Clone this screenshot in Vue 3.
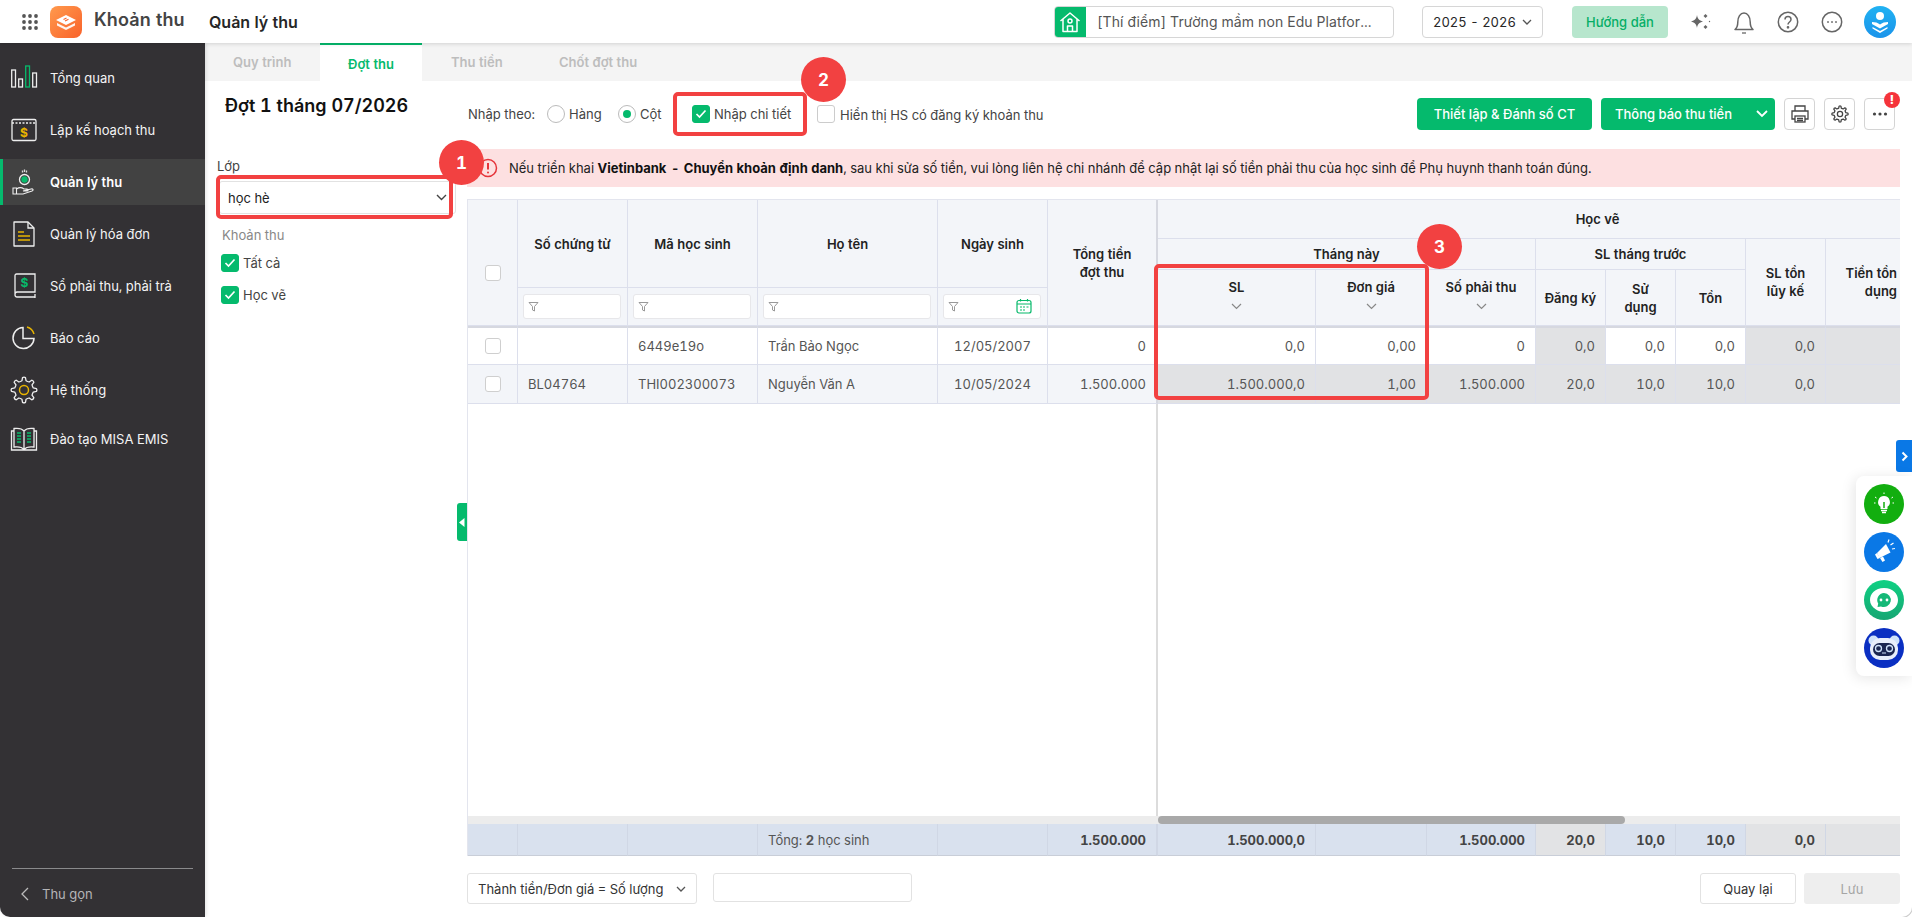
<script setup>
const gear = (c, ro, ri, n) => {
  let d = ''
  for (let i = 0; i < n; i++) {
    const a = (i / n) * Math.PI * 2
    const s = Math.PI / n
    const p = (r, t) => `${(c + r * Math.cos(t)).toFixed(2)} ${(c + r * Math.sin(t)).toFixed(2)}`
    d += `${i ? 'L' : 'M'}${p(ri, a - s * 0.55)}L${p(ro, a - s * 0.3)}Q${p(ro + 0.8, a)} ${p(ro, a + s * 0.3)}L${p(ri, a + s * 0.55)}Q${p(ri - 0.3, a + s)} ${p(ri, a + s * 1.45)}`
  }
  return d + 'Z'
}
const bigGear = gear(14, 12.5, 9.5, 8)
const smallGear = gear(12, 10.5, 8, 8)

const menu = [
  { key: 'overview', label: 'Tổng quan' },
  { key: 'plan', label: 'Lập kế hoạch thu' },
  { key: 'manage', label: 'Quản lý thu', active: true },
  { key: 'invoice', label: 'Quản lý hóa đơn' },
  { key: 'ledger', label: 'Sổ phải thu, phải trả' },
  { key: 'report', label: 'Báo cáo' },
  { key: 'system', label: 'Hệ thống' },
  { key: 'training', label: 'Đào tạo MISA EMIS', tight: true }
]
const tabs = [
  { label: 'Quy trình', cls: 't1' },
  { label: 'Đợt thu', cls: 't2', active: true },
  { label: 'Thu tiền', cls: 't3' },
  { label: 'Chốt đợt thu', cls: 't4' }
]
const heads = [
  { text: 'Số chứng từ', area: '1 / 2 / 4 / 3' },
  { text: 'Mã học sinh', area: '1 / 3 / 4 / 4' },
  { text: 'Họ tên', area: '1 / 4 / 4 / 5' },
  { text: 'Ngày sinh', area: '1 / 5 / 4 / 6' },
  { text: 'Tổng tiền đợt thu', area: '1 / 6 / 5 / 7', cls: 'frozen narrow' },
  { text: 'Học vẽ', area: '1 / 7 / 2 / 15', cls: 'group' },
  { text: 'Tháng này', area: '2 / 7 / 3 / 10' },
  { text: 'SL tháng trước', area: '2 / 10 / 3 / 13' },
  { text: 'SL tồn lũy kế', area: '2 / 13 / 5 / 14', cls: 'narrow2' },
  { text: 'Tiền tồn dụng', area: '2 / 14 / 5 / 15', cls: 'endcol' },
  { text: 'SL', area: '3 / 7 / 5 / 8', chev: true },
  { text: 'Đơn giá', area: '3 / 8 / 5 / 9', chev: true },
  { text: 'Số phải thu', area: '3 / 9 / 5 / 10', chev: true },
  { text: 'Đăng ký', area: '3 / 10 / 5 / 11' },
  { text: 'Sử dụng', area: '3 / 11 / 5 / 12', cls: 'narrow' },
  { text: 'Tồn', area: '3 / 12 / 5 / 13' }
]
const filters = [
  { area: '4 / 2 / 5 / 3' },
  { area: '4 / 3 / 5 / 4' },
  { area: '4 / 4 / 5 / 5' },
  { area: '4 / 5 / 5 / 6', date: true }
]
const rows = [
  { cls: 'first', cells: [
    ['', ''], ['6449e19o', ''], ['Trần Bảo Ngọc', ''], ['12/05/2007', 'mid'], ['0', 'num frozen'],
    ['0,0', 'num w'], ['0,00', 'num w'], ['0', 'num w'], ['0,0', 'num g'], ['0,0', 'num w'], ['0,0', 'num w'], ['0,0', 'num g'], ['', 'num g end']
  ] },
  { cls: 'second', cells: [
    ['BL04764', ''], ['THI002300073', ''], ['Nguyễn Văn A', ''], ['10/05/2024', 'mid'], ['1.500.000', 'num frozen'],
    ['1.500.000,0', 'num g'], ['1,00', 'num g'], ['1.500.000', 'num g'], ['20,0', 'num g'], ['10,0', 'num g'], ['10,0', 'num g'], ['0,0', 'num g'], ['', 'num g end']
  ] }
]
const foot = [
  ['1.500.000', 'num frozen'],
  ['1.500.000,0', 'num'], ['', 'num'], ['1.500.000', 'num'], ['20,0', 'num g'], ['10,0', 'num'], ['10,0', 'num'], ['0,0', 'num g'], ['', 'num g end']
]
</script>

<template>
  <div class="app">
    <header class="top">
      <svg class="grid-ic" width="16" height="16" viewBox="0 0 16 16" fill="#555">
        <template v-for="y in [2,8,14]" :key="y"><circle v-for="x in [2,8,14]" :key="x" :cx="x" :cy="y" r="1.9" /></template>
      </svg>
      <svg class="logo" width="32" height="32" viewBox="0 0 32 32">
        <defs><linearGradient id="lg" x1="0" y1="0" x2="1" y2="1"><stop offset="0" stop-color="#ff9a4d" /><stop offset="1" stop-color="#f9622a" /></linearGradient></defs>
        <rect width="32" height="32" rx="8" fill="url(#lg)" />
        <path d="M16 9l10 5-10 5-10-5z" fill="#fff" />
        <path d="M7 17l9 4.500 9-4.500v2.500l-9 4.500-9-4.500z" fill="#fff" opacity=".92" />
        <path d="M13.500 13.500l3-1.500M15 15l3.500-1.700" stroke="#f9622a" stroke-width="1.100" />
      </svg>
      <span class="app-name">Khoản thu</span>
      <span class="page-name">Quản lý thu</span>
      <div class="school">
        <span class="school-ic">
          <svg width="22" height="22" viewBox="0 0 22 22" fill="none" stroke="#fff" stroke-width="1.500" stroke-linejoin="round"><path d="M1.500 10L11 2l9.500 8M4 8v12.500h14V8M8.500 20.500V15h5v5.500" /><circle cx="11" cy="10" r="2" /></svg>
        </span>
        <span class="school-text">[Thí điểm] Trường mầm non Edu Platfor...</span>
      </div>
      <div class="year">
        <span>2025 - 2026</span>
        <svg width="10" height="6" viewBox="0 0 10 6" fill="none" stroke="#555" stroke-width="1.300"><path d="M1 1l4 4 4-4" /></svg>
      </div>
      <button class="guide">Hướng dẫn</button>
      <div class="top-icons">
        <svg width="24" height="24" viewBox="0 0 24 24" fill="#666"><path d="M9 5c.7 4 2 5.400 6 6.500-4 1.100-5.300 2.500-6 6.500-.7-4-2-5.400-6-6.500 4-1.100 5.300-2.500 6-6.500z" /><path d="M17.500 4l2 2-2 2-2-2zM17.500 15l2 2-2 2-2-2z" /><circle cx="21.500" cy="11.500" r=".7" /></svg>
        <svg width="24" height="24" viewBox="0 0 24 24" fill="none" stroke="#666" stroke-width="1.500"><path d="M3 19.500c1.800-1.500 2.800-3 2.800-7.500 0-5 2.500-9 6.200-9s6.200 4 6.200 9c0 4.500 1 6 2.800 7.500z" stroke-linejoin="round" /><path d="M10 23h4" stroke-width="1.300" /></svg>
        <svg width="24" height="24" viewBox="0 0 24 24" fill="none" stroke="#666" stroke-width="1.500"><circle cx="12" cy="12" r="9.700" /><path d="M9 9.500c0-4 6-4 6 0 0 2.500-3 2.500-3 5" /><circle cx="12" cy="17.300" r=".6" fill="#666" /></svg>
        <svg width="24" height="24" viewBox="0 0 24 24" fill="none" stroke="#666" stroke-width="1.500"><circle cx="12" cy="12" r="9.700" /><circle cx="8" cy="12" r=".5" fill="#666" stroke-width="1" /><circle cx="12" cy="12" r=".5" fill="#666" stroke-width="1" /><circle cx="16" cy="12" r=".5" fill="#666" stroke-width="1" /></svg>
      </div>
      <svg class="avatar" width="32" height="32" viewBox="0 0 32 32">
        <defs><linearGradient id="av" x1="0" y1="0" x2="0" y2="1"><stop offset="0" stop-color="#21b2f2" /><stop offset="1" stop-color="#1a93ea" /></linearGradient></defs>
        <circle cx="16" cy="16" r="16" fill="url(#av)" />
        <circle cx="16" cy="10" r="4" fill="#fff" />
        <path d="M8 16c3 0 6 .8 8 2.500 2-1.700 5-2.500 8-2.500v2l-8 4.500-8-4.500z" fill="#fff" />
        <path d="M8.500 21l7.500 4 7.500-4v1.500L16 27l-7.500-4.500z" fill="#fff" />
      </svg>
    </header>

    <div class="main">
      <aside class="side">
        <nav class="menu">
          <a v-for="m in menu" :key="m.key" class="item" :class="{ active: m.active, tight: m.tight }">
            <svg width="28" height="28" viewBox="0 0 28 28" fill="none" stroke="#eee" stroke-width="1.300">
              <template v-if="m.key === 'overview'">
                <rect x="1.700" y="6" width="3.800" height="17" /><rect x="8.700" y="15" width="3.800" height="8" />
                <rect x="15.700" y="2" width="3.800" height="21" stroke="#07b96b" /><rect x="22.700" y="9" width="3.800" height="14" />
              </template>
              <template v-else-if="m.key === 'plan'">
                <rect x="2" y="3.500" width="24" height="21" rx="1.500" /><path d="M2 7h24" stroke-dasharray="2 1.500" />
                <text x="14" y="21" text-anchor="middle" font-size="12" font-weight="700" font-family="Inter" fill="#e8b400" stroke="none">$</text>
              </template>
              <template v-else-if="m.key === 'manage'">
                <circle cx="14.500" cy="11.500" r="5" /><circle cx="14.500" cy="11.500" r="3.200" fill="#07b96b" stroke="none" />
                <path d="M12.500 4.500V2.500M14.500 4V1.500M16.500 4.500V2.500" stroke="#ddd" />
                <path d="M3 20h3.500v6H3zM6.500 21c3-2 5.500-1.500 7.500 0h3c1.500 0 1.500 2 0 2h-4l8-2c2-.5 3 1 1 2l-9 3H6.500" stroke-width="1.100" />
              </template>
              <template v-else-if="m.key === 'invoice'">
                <path d="M4 2h14l6 6v18H4z" stroke-linejoin="round" /><path d="M18 2v6h6" />
                <path d="M8 12h6M8 16h12M8 20h12" stroke="#e8b400" stroke-width="1.400" />
              </template>
              <template v-else-if="m.key === 'ledger'">
                <path d="M5 22V3.500c0-.8.700-1.500 1.500-1.500H25v18H7c-2.700 0-2.700 5 0 5h18" /><path d="M25 22v4" />
                <text x="14.500" y="15" text-anchor="middle" font-size="12" font-weight="700" font-family="Inter" fill="#07b96b" stroke="none">$</text>
              </template>
              <template v-else-if="m.key === 'report'">
                <path d="M13 3.500a10.500 10.500 0 1 0 11 11H13z" stroke-width="1.500" /><path d="M17 3c3.500 1 6 3.500 7 7" stroke="#e8b400" stroke-width="1.500" />
              </template>
              <template v-else-if="m.key === 'system'">
                <path :d="bigGear" stroke-linejoin="round" />
                <circle cx="14" cy="14" r="4.500" stroke="#e8b400" stroke-width="1.500" />
              </template>
              <template v-else>
                <path d="M4 6H1.500v19h25V6H24M14 6c-2-2.500-6-3-10-2.500V22c4-.5 8 0 10 2.500 2-2.500 6-3 10-2.500V3.500C20 3 16 3.500 14 6zM14 6v18" />
                <path d="M7 8h4M7 11h4M7 14h4M7 17h4M17 8h4M17 11h4M17 14h4M17 17h4" stroke="#07b96b" stroke-width="1.500" />
              </template>
            </svg>
            <span>{{ m.label }}</span>
          </a>
        </nav>
        <div class="collapse">
          <svg width="10" height="16" viewBox="0 0 10 16" fill="none" stroke="#bbb" stroke-width="1.300"><path d="M8 2L2 8l6 6" /></svg>
          <span>Thu gọn</span>
        </div>
      </aside>

      <section class="content">
        <div class="tabs">
          <span v-for="t in tabs" :key="t.label" class="tab" :class="[t.cls, { active: t.active }]">{{ t.label }}</span>
        </div>
        <div class="work">
          <div class="left">
            <h2>Đợt 1 tháng 07/2026</h2>
            <label class="lop">Lớp</label>
            <div class="class-select">
              <span>học hè</span>
              <svg width="11" height="7" viewBox="0 0 11 7" fill="none" stroke="#444" stroke-width="1.400"><path d="M1 1l4.500 4.500L10 1" /></svg>
            </div>
            <div class="fee-title">Khoản thu</div>
            <div class="fee"><i class="cb on"><svg width="12" height="10" viewBox="0 0 12 10" fill="none" stroke="#fff" stroke-width="1.700"><path d="M1.500 5l3 3 6-6.500" /></svg></i>Tất cả</div>
            <div class="fee"><i class="cb on"><svg width="12" height="10" viewBox="0 0 12 10" fill="none" stroke="#fff" stroke-width="1.700"><path d="M1.500 5l3 3 6-6.500" /></svg></i>Học vẽ</div>
          </div>

          <div class="right">
            <div class="toolbar">
              <span class="tl">Nhập theo:</span>
              <i class="radio"></i><span class="hang">Hàng</span>
              <i class="radio sel"></i><span class="cot">Cột</span>
              <i class="cb on small"><svg width="12" height="10" viewBox="0 0 12 10" fill="none" stroke="#fff" stroke-width="1.700"><path d="M1.500 5l3 3 6-6.500" /></svg></i>
              <span class="detail">Nhập chi tiết</span>
              <i class="cb small second"></i>
              <span class="showhs">Hiển thị HS có đăng ký khoản thu</span>
              <div class="actions">
                <button class="btn setup">Thiết lập &amp; Đánh số CT</button>
                <button class="btn notify"><span>Thông báo thu tiền</span><svg width="12" height="8" viewBox="0 0 12 8" fill="none" stroke="#fff" stroke-width="1.800"><path d="M1 1l5 5 5-5" /></svg></button>
                <button class="sq">
                  <svg width="20" height="20" viewBox="0 0 20 20" fill="none" stroke="#444" stroke-width="1.300"><path d="M5 7V2h10v5M5 15H2V7h16v8h-3" /><rect x="5" y="12" width="10" height="6" /><path d="M7 14.500h6M7 16.500h6" /></svg>
                </button>
                <button class="sq">
                  <svg width="18" height="18" viewBox="0 0 24 24" fill="none" stroke="#444" stroke-width="1.700"><path :d="smallGear" stroke-linejoin="round" /><circle cx="12" cy="12" r="3.500" /></svg>
                </button>
                <button class="sq">
                  <svg width="16" height="4" viewBox="0 0 16 4" fill="#444"><circle cx="2.500" cy="2" r="1.600" /><circle cx="8" cy="2" r="1.600" /><circle cx="13.500" cy="2" r="1.600" /></svg>
                </button>
              </div>
            </div>
            <div class="alert">
              <svg width="20" height="20" viewBox="0 0 20 20" fill="none" stroke="#e5343a" stroke-width="1.500"><circle cx="10" cy="10" r="8.500" /><path d="M10 5v6.500" stroke-width="2" /><circle cx="10" cy="14.500" r="1" fill="#e5343a" stroke="none" /></svg>
              <span>Nếu triển khai <b>Vietinbank <em>-</em> Chuyển khoản định danh</b>, sau khi sửa số tiền, vui lòng liên hệ chi nhánh để cập nhật lại số tiền phải thu của học sinh để Phụ huynh thanh toán đúng.</span>
            </div>

            <div class="table">
              <div class="c head check-head"><i class="cb box"></i></div>
              <div v-for="h in heads" :key="h.text" class="c head" :class="[h.cls, { raised: h.chev }]" :style="{ gridArea: h.area }">
                <span>{{ h.text }}</span>
                <svg v-if="h.chev" class="chev" width="11" height="7" viewBox="0 0 11 7" fill="none" stroke="#888" stroke-width="1.200"><path d="M1 1l4.500 4.500L10 1" /></svg>
              </div>
              <div v-for="(f, i) in filters" :key="i" class="c head filter" :style="{ gridArea: f.area }">
                <div class="finput">
                  <svg width="11" height="11" viewBox="0 0 11 11" fill="none" stroke="#999" stroke-width="1"><path d="M1 1.500h9L6.500 5.500V10L4.500 9V5.500z" stroke-linejoin="round" /></svg>
                  <svg v-if="f.date" class="cal" width="16" height="16" viewBox="0 0 16 16" fill="none" stroke="#07b96b" stroke-width="1.200"><rect x="1" y="2.500" width="14" height="12.500" rx="2" /><path d="M1 6h14M4.500 1v2.500M11.500 1v2.500M4 9h2M7 9h2M10.500 9h2M4 12h2M7 12h2" /></svg>
                </div>
              </div>

              <template v-for="r in rows" :key="r.cls">
                <div class="c rowcheck" :class="r.cls"><i class="cb box"></i></div>
                <div v-for="(cell, i) in r.cells" :key="i" class="c cell" :class="[cell[1], r.cls]">{{ cell[0] }}</div>
              </template>

              <div class="fill frozen-fill"></div>
              <div class="fill"></div>

              <div class="track">
                <div class="track-l"></div>
                <div class="thumb"></div>
              </div>

              <div v-for="i in 3" :key="'a' + i" class="c foot"></div>
              <div class="c foot label"><span>Tổng: <b>2</b> học sinh</span></div>
              <div class="c foot"></div>
              <div v-for="(f, i) in foot" :key="'b' + i" class="c foot" :class="f[1]">{{ f[0] }}</div>
            </div>

            <div class="bottom">
              <div class="formula"><span>Thành tiền/Đơn giá = Số lượng</span><svg width="10" height="6" viewBox="0 0 10 6" fill="none" stroke="#555" stroke-width="1.300"><path d="M1 1l4 4 4-4" /></svg></div>
              <div class="blank"></div>
              <button class="back">Quay lại</button>
              <button class="save">Lưu</button>
            </div>
          </div>
        </div>
      </section>
    </div>

    <!-- overlays -->
    <div class="mark m1"></div>
    <div class="mark m2"></div>
    <div class="mark m3"></div>
    <div class="num-badge b1">1</div>
    <div class="num-badge b2">2</div>
    <div class="num-badge b3">3</div>
    <div class="alert-dot">!</div>
    <div class="handle"><svg width="6" height="9" viewBox="0 0 6 9" fill="#fff"><path d="M5.500 0v9L0 4.500z" /></svg></div>
    <div class="blue-tab"><svg width="7" height="11" viewBox="0 0 7 11" fill="none" stroke="#fff" stroke-width="2"><path d="M1.500 1.500l4 4-4 4" /></svg></div>
    <div class="float">
      <svg width="40" height="40" viewBox="0 0 40 40">
        <circle cx="20" cy="20" r="20" fill="#12ae0f" />
        <path d="M20 12a6 6 0 0 0-3.500 10.800V25h7v-2.200A6 6 0 0 0 20 12z" fill="#fff" /><path d="M17 26.500h6M18 28.500h4" stroke="#fff" stroke-width="1.300" />
        <path d="M20 18v6" stroke="#12ae0f" stroke-width="1.500" />
        <path d="M11 13l1.500 1M29 13l-1.500 1M10 19h1.500M28.500 19H30M20 8.500V10" stroke="#fff" stroke-width="1" />
      </svg>
      <svg width="40" height="40" viewBox="0 0 40 40">
        <circle cx="20" cy="20" r="20" fill="#0a78e6" />
        <path d="M13 21l9-9 4.500 8.500-11 5.500z" fill="#fff" /><path d="M13 21l-2 1.500 2.500 4.500 2.500-1z" fill="#fff" /><path d="M16 26l2.500 4 2.500-1.500-2-4z" fill="#fff" />
        <path d="M24 10.500l1-3M26.500 13l3-2M28 17l3-.5" stroke="#fff" stroke-width="1.200" />
      </svg>
      <svg width="40" height="40" viewBox="0 0 40 40">
        <defs><linearGradient id="gc" x1="0" y1="0" x2="0" y2="1"><stop offset="0" stop-color="#0fd183" /><stop offset="1" stop-color="#17a673" /></linearGradient></defs>
        <circle cx="20" cy="20" r="20" fill="url(#gc)" />
        <path d="M20 8c9 0 14 6 14 12s-5 12-14 12c-3 0-6-1-8-2.500C8 27 6 24 6 20 6 14 11 8 20 8z" fill="#fff" />
        <path d="M20 13a7 7 0 1 1-3 13.400L13.500 27l.7-3.400A7 7 0 0 1 20 13z" fill="#15b877" />
        <circle cx="17" cy="20" r="1.400" fill="#fff" /><circle cx="23" cy="20" r="1.400" fill="#fff" />
      </svg>
      <svg width="40" height="40" viewBox="0 0 40 40">
        <circle cx="20" cy="20" r="20" fill="#0a2fc2" />
        <circle cx="9.500" cy="12.500" r="5" fill="#cfe2fa" /><circle cx="30.500" cy="12.500" r="5" fill="#cfe2fa" />
        <rect x="6" y="10" width="28" height="22" rx="10" fill="#e8eefb" />
        <rect x="9" y="15" width="22" height="13" rx="6.500" fill="#1a2550" />
        <circle cx="14.500" cy="20.500" r="3" fill="none" stroke="#cfe2fa" stroke-width="1.300" /><circle cx="25.500" cy="20.500" r="3" fill="none" stroke="#cfe2fa" stroke-width="1.300" />
        <path d="M18 25h4" stroke="#cfe2fa" stroke-width="1" />
      </svg>
    </div>
  </div>
</template>

<style>
html, body { margin: 0; padding: 0; background: #fff; overflow: hidden; }
</style>

<style scoped>
* { box-sizing: border-box; }
.app { position: relative; width: 1912px; height: 917px; display: flex; flex-direction: column; overflow: hidden; font-family: Inter, "Noto Sans", sans-serif; font-size: 13px; font-variant-numeric: tabular-nums; color: #333; background: #fff; }

.top { height: 43px; flex: none; display: flex; align-items: center; background: #fff; box-shadow: 0 1px 4px rgba(0,0,0,.14); position: relative; z-index: 3; padding: 0 16px 0 22px; }
.logo { margin-left: 12px; }
.app-name { margin-left: 12px; font-size: 18px; letter-spacing: .15px; font-weight: 600; color: #444; line-height: 1; position: relative; top: -2px; width: 115px; white-space: nowrap; }
.page-name { font-size: 16px; font-weight: 600; color: #262626; white-space: nowrap; }
.school { margin-left: auto; width: 340px; height: 32px; border: 1px solid #d6d6d6; border-radius: 4px; display: flex; align-items: center; overflow: hidden; }
.school-ic { width: 32px; height: 32px; background: #05ba6d; display: flex; align-items: center; justify-content: center; flex: none; margin-left: -1px; }
.school-text { margin-left: 11px; font-size: 14px; letter-spacing: .1px; color: #555; white-space: nowrap; }
.year { margin-left: 28px; width: 121px; height: 32px; border: 1px solid #d6d6d6; border-radius: 4px; display: flex; align-items: center; justify-content: space-between; padding: 0 10px; color: #262626; }
.guide { margin-left: 29px; width: 96px; height: 32px; border: 0; border-radius: 4px; background: #b7e6cd; color: #05ae66; font: 500 13px Inter, sans-serif; }
.top-icons { margin-left: 20px; display: flex; gap: 20px; }
.avatar { margin-left: 20px; }

.main { flex: 1; display: flex; min-height: 0; }
.side { width: 205px; flex: none; background: #333134; display: flex; flex-direction: column; border-bottom-left-radius: 10px; box-shadow: 1px 0 4px rgba(0,0,0,.12); position: relative; z-index: 2; }
.menu { flex: 1; padding-top: 9px; }
.item { height: 52px; display: flex; align-items: center; gap: 12px; padding-left: 10px; color: #f4f4f4; font-size: 13px; font-weight: 400; }
.item.tight { margin-top: -3px; }
.item.active { height: 46px; margin: 3px 0; background: #424242; border-left: 3px solid #05ba6d; padding-left: 7px; font-weight: 600; color: #fff; }
.collapse { margin: 0 12px; height: 49px; border-top: 1px solid #8a8a8c; display: flex; align-items: center; gap: 12px; padding: 2px 0 0 8px; color: #b5b5b8; font-size: 13px; }

.content { flex: 1; min-width: 0; display: flex; flex-direction: column; border-bottom-right-radius: 10px; box-shadow: 0 0 0 1px #ccc; }
.tabs { height: 38px; flex: none; background: #f4f4f4; display: flex; }
.tab { color: #bdbdbd; font-weight: 600; font-size: 13px; line-height: 38px; white-space: nowrap; }
.t1 { margin-left: 28px; width: 87px; }
.t2 { width: 102px; text-align: center; background: #fff; color: #05ba6d; border-top: 2px solid #05ba6d; line-height: 38px; }
.t3 { margin-left: 29px; width: 108px; }
.work { flex: 1; min-height: 0; display: flex; }

.left { width: 262px; flex: none; padding: 0 9px 0 12px; }
.left h2 { margin: 14px 0 0 8px; font-size: 18px; font-weight: 600; line-height: 22px; color: #111; white-space: nowrap; }
.lop { display: block; margin-top: 41px; color: #444; line-height: 16px; }
.class-select { margin: 7px 0 0 2px; width: 237px; height: 33px; border: 1px solid #e2e2e2; border-radius: 3px; display: flex; align-items: center; justify-content: space-between; padding: 0 8px 0 8px; color: #222; }
.fee-title { margin: 13px 0 0 5px; color: #888; line-height: 16px; }
.fee { margin: 12px 0 0 4px; height: 20px; display: flex; align-items: center; gap: 4px; color: #444; }
.fee-title + .fee { margin-top: 10px; }
.cb { width: 18px; height: 18px; border-radius: 3px; border: 1px solid #ccc; background: #fff; display: inline-flex; align-items: center; justify-content: center; flex: none; }
.cb.on { background: #05ba6d; border-color: #05ba6d; }
.cb.box { width: 16px; height: 16px; border-color: #cfcfcf; }

.right { flex: 1; min-width: 0; display: flex; flex-direction: column; padding-right: 12px; }
.toolbar { height: 68px; flex: none; display: flex; align-items: center; padding: 0 0 2px 1px; color: #444; white-space: nowrap; font-size: 13px; }
.radio { width: 18px; height: 18px; border-radius: 50%; border: 1px solid #bbb; background: #fff; display: inline-flex; align-items: center; justify-content: center; flex: none; }
.radio.sel::after { content: ""; width: 8px; height: 8px; border-radius: 50%; background: #05ba6d; }
.tl { width: 79px; }
.hang { margin-left: 4px; width: 49px; }
.cot { margin-left: 4px; width: 52px; }
.detail { margin-left: 4px; width: 103px; }
.showhs { margin-left: 5px; position: relative; top: 1px; }
.actions { margin-left: auto; display: flex; gap: 9px; padding-right: 5px; }
.btn { height: 32px; border: 0; border-radius: 4px; background: #05ba6d; color: #fff; font: 500 13px Inter, sans-serif; white-space: nowrap; }
.setup { width: 175px; }
.notify { width: 174px; display: flex; align-items: center; justify-content: space-between; padding: 0 7px 0 14px; }
.sq { width: 31px; height: 32px; border: 1px solid #d4d4d4; border-radius: 4px; background: #fff; padding: 0; display: flex; align-items: center; justify-content: center; }

.alert { height: 38px; flex: none; background: #fde0e1; display: flex; align-items: center; padding-left: 11px; gap: 11px; color: #222; font-size: 13px; white-space: nowrap; }
.alert b { font-weight: 700; color: #111; }
.alert em { font-style: normal; margin: 0 1px; }

.table { margin-top: 12px; flex: 1; min-height: 0; overflow: hidden; display: grid; grid-template-columns: 50px 110px 130px 180px 110px 110px 158px 111px 109px 70px 70px 70px 80px 75px; grid-template-rows: 39px 31px 18px 38px 39px 39px 1fr 8px 32px; border-top: 1px solid #e3e5ee; border-left: 1px solid #e3e5ee; }
.c { border-right: 1px solid #dcdfec; border-bottom: 1px solid #dcdfec; display: flex; align-items: center; min-width: 0; }
.head { background: #f3f5f9; justify-content: center; text-align: center; font-weight: 600; font-size: 13px; color: #222; line-height: 18px; padding: 0 6px; flex-direction: column; }
.head.narrow { padding: 0 20px; }
.head.narrow2 { padding: 0 14px; }
.head.frozen { border-right: 2px solid #d6d8e0; }
.head.group { padding-left: 143px; }
.head.endcol { border-right: 0; align-items: flex-end; text-align: right; padding: 0 4px 0 10px; }
.head.raised { padding-bottom: 8px; }
.check-head { grid-area: 1 / 1 / 5 / 2; padding: 20px 0 0; align-items: center; }
.chev { margin-top: 7px; }
.filter { padding: 5px 6px 6px 5px; }
.finput { width: 100%; height: 25px; background: #fff; border: 1px solid #e7e7ea; border-radius: 3px; display: flex; align-items: center; justify-content: space-between; padding: 0 8px 0 4px; }
.rowcheck { justify-content: center; background: #fff; }
.rowcheck.second { background: #f3f5f9; }
.rowcheck.first { border-top: 2px solid #d6d8e0; }
.cell { padding: 0 10px; color: #555; white-space: nowrap; background: #fff; }
.cell.mid { justify-content: center; }
.cell.num { justify-content: flex-end; }
.cell.second { background: #f3f5f9; }
.cell.first { border-top: 2px solid #d6d8e0; }
.cell.frozen { border-right: 2px solid #d6d8e0; }
.cell.g { background: #e1e2e4; }
.cell.w { background: #fff; }
.cell.end { border-right: 0; }
.fill { background: #fff; }
.frozen-fill { grid-column: 1 / 7; border-right: 2px solid #dcdcdc; }
.fill:not(.frozen-fill) { grid-column: 7 / 15; }
.track { grid-column: 1 / 15; background: #ececec; display: flex; }
.track-l { width: 690px; flex: none; }
.thumb { width: 467px; background: #a9a9a9; border-radius: 4px; }
.foot { background: #d9e1ee; border-right: 1px solid #d0d7e5; border-bottom: 1px solid #c9ced8; padding: 0 10px; font-weight: 700; color: #444; white-space: nowrap; }
.foot.num { justify-content: flex-end; }
.foot.g { background: #e2e3e5; }
.foot.end { border-right: 0; }
.foot.frozen { border-right: 2px solid #d0d7e5; }
.foot.label { font-weight: 400; color: #555; }
.foot.label b { font-weight: 700; }

.bottom { height: 61px; flex: none; display: flex; align-items: flex-start; padding-top: 17px; }
.formula { width: 230px; height: 31px; border: 1px solid #e2e2e2; border-radius: 3px; display: flex; align-items: center; justify-content: space-between; padding: 0 10px 0 10px; color: #333; white-space: nowrap; }
.formula span { width: 186px; overflow: hidden; }
.blank { margin-left: 16px; width: 199px; height: 29px; border: 1px solid #e2e2e2; border-radius: 3px; }
.back { margin-left: auto; width: 96px; height: 31px; border: 1px solid #e2e2e2; border-radius: 3px; background: #fff; font: 400 13px Inter, sans-serif; color: #333; }
.save { margin-left: 8px; width: 96px; height: 31px; border: 0; border-radius: 3px; background: #eee; font: 400 13px Inter, sans-serif; color: #a5a5a5; }

.mark { position: absolute; border: 4px solid #f24141; border-radius: 5px; z-index: 5; }
.m1 { left: 216px; top: 175px; width: 237px; height: 44px; }
.m2 { left: 673px; top: 92px; width: 134px; height: 44px; }
.m3 { left: 1154px; top: 264px; width: 275px; height: 136px; }
.num-badge { position: absolute; width: 45px; height: 45px; border-radius: 50%; background: #f24141; color: #fff; font-weight: 700; font-size: 17px; display: flex; align-items: center; justify-content: center; z-index: 6; }
.b1 { left: 439px; top: 140px; }
.b2 { left: 801px; top: 57px; }
.b3 { left: 1417px; top: 224px; }
.alert-dot { position: absolute; left: 1884px; top: 92px; width: 16px; height: 16px; border-radius: 50%; background: #f5333a; color: #fff; font-size: 12px; font-weight: 800; line-height: 16px; text-align: center; z-index: 6; }
.handle { position: absolute; left: 457px; top: 503px; width: 10px; height: 38px; background: #05ba6d; border-radius: 3px 0 0 3px; display: flex; align-items: center; justify-content: center; z-index: 4; }
.blue-tab { position: absolute; left: 1896px; top: 440px; width: 16px; height: 32px; background: #0a78e6; border-radius: 3px 0 0 3px; display: flex; align-items: center; justify-content: center; z-index: 6; }
.float { position: absolute; left: 1856px; top: 476px; width: 56px; height: 200px; background: #fff; border-radius: 8px 0 0 8px; box-shadow: -2px 2px 14px rgba(0,0,0,.1); display: flex; flex-direction: column; align-items: center; gap: 8px; padding-top: 8px; z-index: 6; }
</style>
